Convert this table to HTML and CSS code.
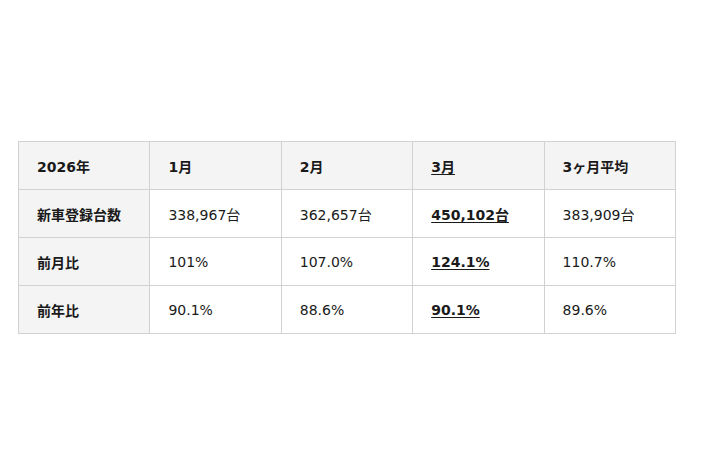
FILE: index.html
```html
<!DOCTYPE html>
<html lang="ja">
<head>
<meta charset="utf-8">
<link rel="stylesheet" href="styles.css">
</head>
<body>
<div class="page">
<table class="stats">
<thead>
<tr>
<th class="label">2026年</th>
<th>1月</th>
<th>2月</th>
<th><span class="hl">3月</span></th>
<th>3ヶ月平均</th>
</tr>
</thead>
<tbody>
<tr>
<th class="label">新車登録台数</th>
<td>338,967台</td>
<td>362,657台</td>
<td><span class="hl">450,102台</span></td>
<td>383,909台</td>
</tr>
<tr>
<th class="label">前月比</th>
<td>101%</td>
<td>107.0%</td>
<td><span class="hl">124.1%</span></td>
<td>110.7%</td>
</tr>
<tr>
<th class="label">前年比</th>
<td>90.1%</td>
<td>88.6%</td>
<td><span class="hl">90.1%</span></td>
<td>89.6%</td>
</tr>
</tbody>
</table>
</div>
</body>
</html>
```
FILE: styles.css
```css
html, body {
  margin: 0;
  padding: 0;
  background: #ffffff;
}
.page {
  padding: 141px 0 0 18px;
  font-family: "DejaVu Sans", "Noto Sans CJK JP", sans-serif;
  color: #1a1a1a;
}
.stats {
  width: 658px;
  border-collapse: collapse;
  table-layout: fixed;
  font-size: 14px;
}
.stats th, .stats td {
  border: 1px solid #d2d2d2;
  height: 48px;
  padding: 0 0 0 18px;
  text-align: left;
  vertical-align: middle;
  box-sizing: border-box;
}
.stats th {
  font-weight: bold;
}
.stats td {
  font-weight: normal;
}
.stats thead th {
  background: #f4f4f4;
}
.stats th.label {
  background: #f4f4f4;
}
.stats tbody td {
  background: #ffffff;
}
.hl {
  font-weight: bold;
  text-decoration: underline;
  text-underline-offset: 2px;
}
```
